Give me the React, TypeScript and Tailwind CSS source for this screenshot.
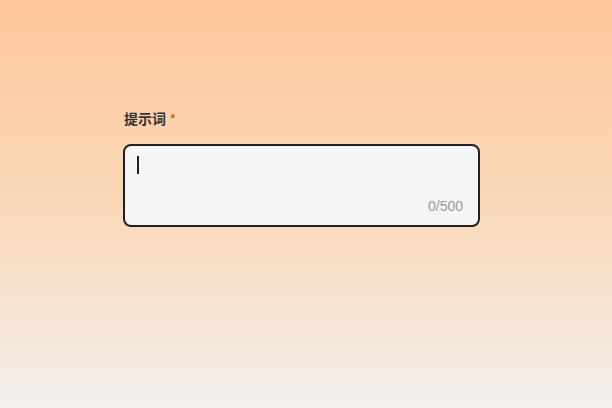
export default function App() {
  return (
    <div
      className="w-[612px] h-[408px] bg-gradient-to-b from-[#fec89b] via-[#f9d8b8] to-[#f3efec] pt-[108px] pl-[123px]"
      style={{ fontFamily: '"Noto Sans CJK SC", "Noto Sans", sans-serif' }}
    >
      <div className="w-[357px] flex flex-col">
        <div className="flex items-center h-[20px] pl-[1px] text-[14px] font-bold text-[#333333] leading-none">
          <span>提示词</span>
          <span className="ml-[4px] text-[#f04438] text-[11px]">*</span>
        </div>
        <div className="mt-[16px] h-[83px] rounded-[8px] border-2 border-[#1f1f1f] bg-[#f4f5f6] flex flex-col justify-between pl-[12px] pr-[15px] pt-[10px] pb-[12px]">
          <div className="w-[2px] h-[18px] bg-[#222222]" />
          <div
            className="self-end text-[14px] text-[#999999] leading-none"
            style={{ fontFamily: '"Liberation Sans", Arial, sans-serif' }}
          >
            0/500
          </div>
        </div>
      </div>
    </div>
  );
}
